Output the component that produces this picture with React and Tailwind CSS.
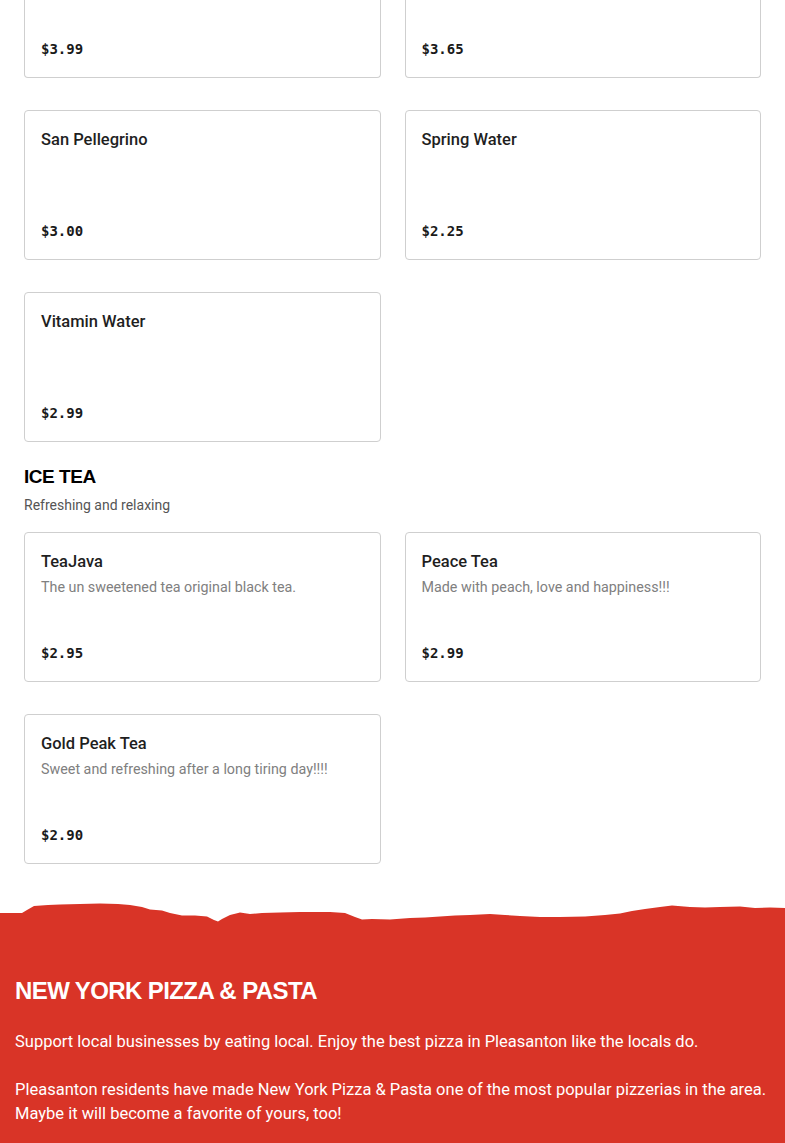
const drinks = [
  { name: "San Pellegrino", price: "$3.00" },
  { name: "Spring Water", price: "$2.25" },
  { name: "Vitamin Water", price: "$2.99" },
];

const teas = [
  { name: "TeaJava", desc: "The un sweetened tea original black tea.", price: "$2.95" },
  { name: "Peace Tea", desc: "Made with peach, love and happiness!!!", price: "$2.99" },
  { name: "Gold Peak Tea", desc: "Sweet and refreshing after a long tiring day!!!!", price: "$2.90" },
];

function Price({ children }) {
  return (
    <div className="mt-auto font-['DejaVu_Sans_Mono',monospace] text-[14px] leading-6 font-bold text-[#1a1a1a]">
      {children}
    </div>
  );
}

function MenuCard({ item }) {
  return (
    <div className="flex h-[150px] flex-col rounded border border-[#cfcfcf] bg-white px-4 pt-[17px] pb-4">
      <h3 className="font-['Roboto',sans-serif] text-[16.5px] leading-6 font-medium text-[#1f1f1f]">
        {item.name}
      </h3>
      {item.desc && (
        <p className="mt-[3px] font-['Roboto',sans-serif] text-[14.3px] leading-5 text-[#808080]">
          {item.desc}
        </p>
      )}
      <Price>{item.price}</Price>
    </div>
  );
}

function CutCard({ price }) {
  return (
    <div className="flex h-[78px] flex-col rounded-b border border-t-0 border-[#cfcfcf] bg-white px-4 pb-4">
      <Price>{price}</Price>
    </div>
  );
}

function TornEdge() {
  return (
    <svg
      className="block h-6 w-full"
      viewBox="0 0 785 24"
      preserveAspectRatio="none"
    >
      <path
        fill="#d93427"
        d="M0 13 L22 13 L27 10 L34 6 L48 5 L60 4.5 L80 4 L100 3.5 L118 4 L130 5 L142 7 L150 9.5 L162 10.5 L170 13 L182 15.5 L195 15.5 L207 16.5 L214 20 L218 21.5 L222 19 L230 15 L240 12.5 L250 14 L262 13 L280 12.5 L300 12 L330 12 L345 13 L355 17 L362 19.5 L372 19 L390 19.5 L410 18 L425 17.5 L440 16.5 L455 15.5 L470 15 L490 14 L505 15 L520 16 L540 17 L560 17 L585 16.5 L605 15 L620 13.5 L632 11 L645 9 L660 7 L672 5.5 L690 7 L705 7.5 L720 7 L740 6.5 L755 8 L770 7.5 L785 8 L785 24 L0 24 Z"
      />
    </svg>
  );
}

export default function App() {
  return (
    <div className="min-h-[1143px] bg-white">
      <div className="px-6">
        <div className="grid grid-cols-2 gap-x-6 gap-y-8">
          <CutCard price="$3.99" />
          <CutCard price="$3.65" />
          {drinks.map((d) => (
            <MenuCard key={d.name} item={d} />
          ))}
        </div>

        <h2 className="mt-[23px] font-['Liberation_Sans',sans-serif] text-[19px] leading-6 font-black tracking-tight text-black">
          ICE TEA
        </h2>
        <p className="mt-1.5 font-['Roboto',sans-serif] text-[14px] leading-5 text-[#555]">
          Refreshing and relaxing
        </p>

        <div className="mt-[17px] grid grid-cols-2 gap-x-6 gap-y-8">
          {teas.map((t) => (
            <MenuCard key={t.name} item={t} />
          ))}
        </div>
      </div>

      <div className="mt-9">
        <TornEdge />
        <footer className="bg-[#d93427] px-[15px] pt-[53px] pb-10 text-white">
          <h2 className="font-['Liberation_Sans',sans-serif] text-[24px] leading-7 font-bold tracking-tight">
            NEW YORK PIZZA &amp; PASTA
          </h2>
          <p className="mt-[25px] font-['Roboto',sans-serif] text-[16.5px] leading-6">
            Support local businesses by eating local. Enjoy the best pizza in Pleasanton like the locals do.
          </p>
          <p className="mt-6 font-['Roboto',sans-serif] text-[16.5px] leading-6">
            Pleasanton residents have made New York Pizza &amp; Pasta one of the most popular pizzerias in the area. Maybe it will become a favorite of yours, too!
          </p>
        </footer>
      </div>
    </div>
  );
}
